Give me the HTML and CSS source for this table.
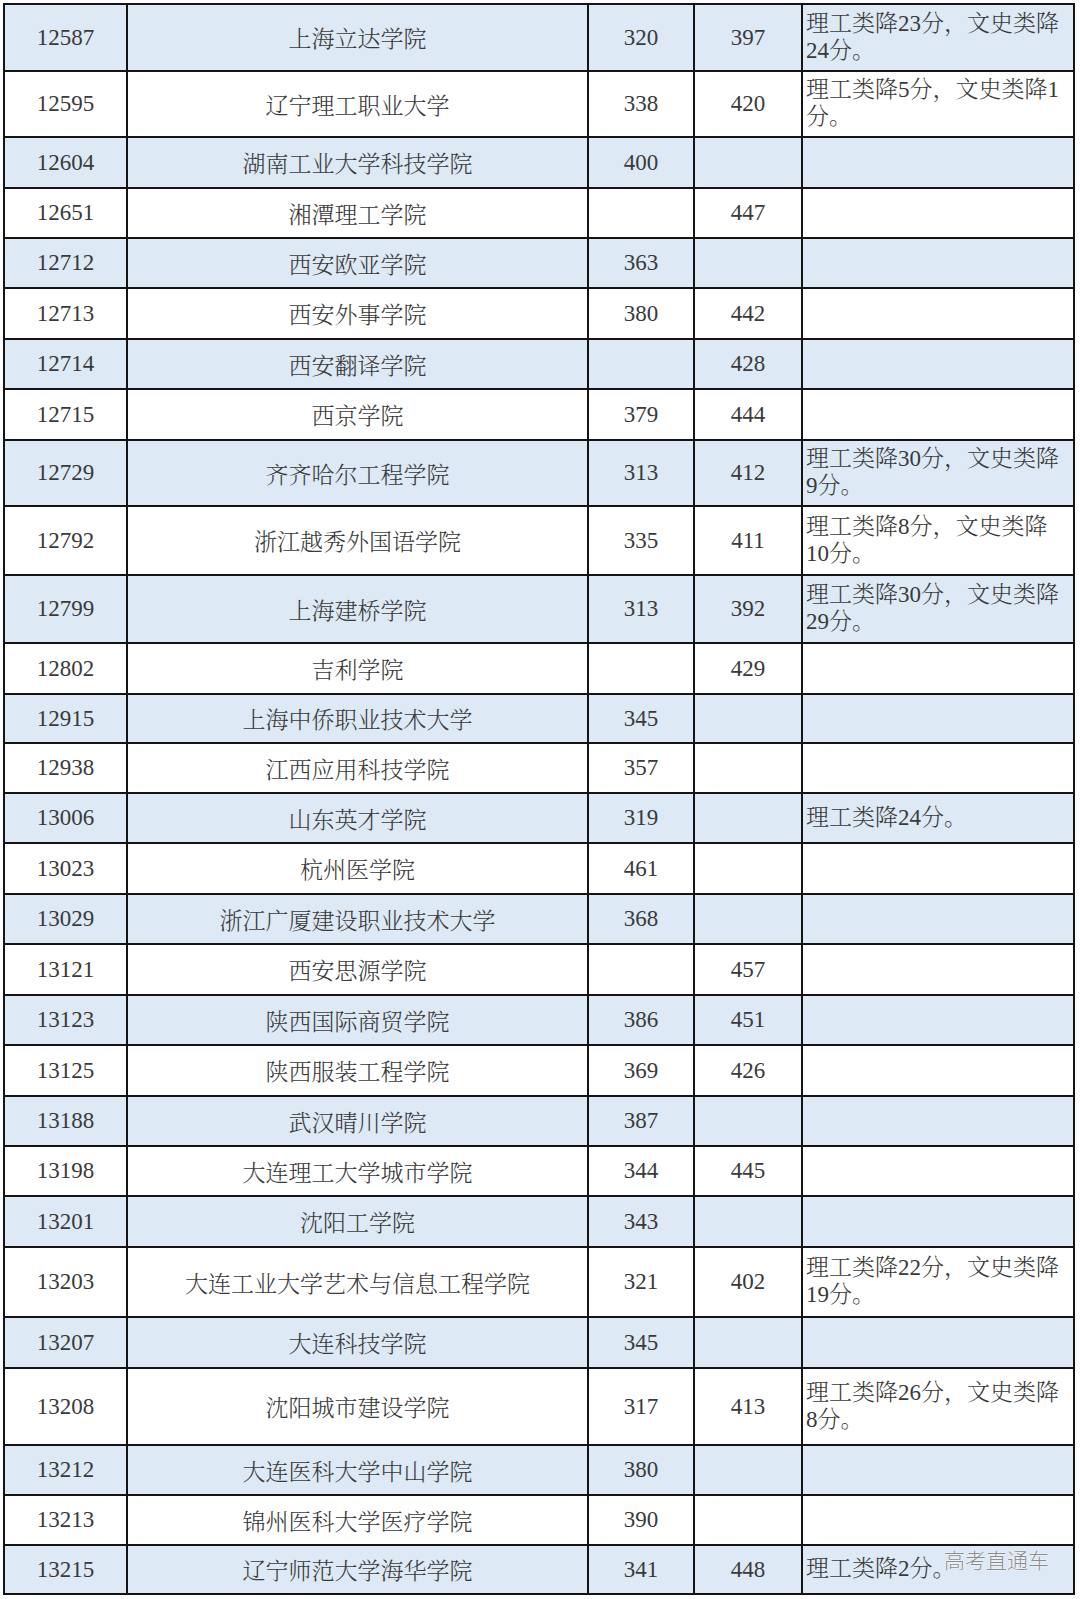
FILE: index.html
```html
<!DOCTYPE html>
<html lang="zh-CN">
<head>
<meta charset="utf-8">
<title>院校投档线</title>
<link rel="stylesheet" href="styles.css">
</head>
<body>
<div class="page">
  <div class="sheet">
    <div class="row alt"><div class="c">12587</div><div class="c">上海立达学院</div><div class="c">320</div><div class="c">397</div><div class="n">理工类降23分，文史类降24分。</div></div>
    <div class="row"><div class="c">12595</div><div class="c">辽宁理工职业大学</div><div class="c">338</div><div class="c">420</div><div class="n">理工类降5分，文史类降1分。</div></div>
    <div class="row alt"><div class="c">12604</div><div class="c">湖南工业大学科技学院</div><div class="c">400</div><div class="c"></div><div class="n"></div></div>
    <div class="row"><div class="c">12651</div><div class="c">湘潭理工学院</div><div class="c"></div><div class="c">447</div><div class="n"></div></div>
    <div class="row alt"><div class="c">12712</div><div class="c">西安欧亚学院</div><div class="c">363</div><div class="c"></div><div class="n"></div></div>
    <div class="row"><div class="c">12713</div><div class="c">西安外事学院</div><div class="c">380</div><div class="c">442</div><div class="n"></div></div>
    <div class="row alt"><div class="c">12714</div><div class="c">西安翻译学院</div><div class="c"></div><div class="c">428</div><div class="n"></div></div>
    <div class="row"><div class="c">12715</div><div class="c">西京学院</div><div class="c">379</div><div class="c">444</div><div class="n"></div></div>
    <div class="row alt"><div class="c">12729</div><div class="c">齐齐哈尔工程学院</div><div class="c">313</div><div class="c">412</div><div class="n">理工类降30分，文史类降9分。</div></div>
    <div class="row"><div class="c">12792</div><div class="c">浙江越秀外国语学院</div><div class="c">335</div><div class="c">411</div><div class="n">理工类降8分，文史类降10分。</div></div>
    <div class="row alt"><div class="c">12799</div><div class="c">上海建桥学院</div><div class="c">313</div><div class="c">392</div><div class="n">理工类降30分，文史类降29分。</div></div>
    <div class="row"><div class="c">12802</div><div class="c">吉利学院</div><div class="c"></div><div class="c">429</div><div class="n"></div></div>
    <div class="row alt"><div class="c">12915</div><div class="c">上海中侨职业技术大学</div><div class="c">345</div><div class="c"></div><div class="n"></div></div>
    <div class="row"><div class="c">12938</div><div class="c">江西应用科技学院</div><div class="c">357</div><div class="c"></div><div class="n"></div></div>
    <div class="row alt"><div class="c">13006</div><div class="c">山东英才学院</div><div class="c">319</div><div class="c"></div><div class="n">理工类降24分。</div></div>
    <div class="row"><div class="c">13023</div><div class="c">杭州医学院</div><div class="c">461</div><div class="c"></div><div class="n"></div></div>
    <div class="row alt"><div class="c">13029</div><div class="c">浙江广厦建设职业技术大学</div><div class="c">368</div><div class="c"></div><div class="n"></div></div>
    <div class="row"><div class="c">13121</div><div class="c">西安思源学院</div><div class="c"></div><div class="c">457</div><div class="n"></div></div>
    <div class="row alt"><div class="c">13123</div><div class="c">陕西国际商贸学院</div><div class="c">386</div><div class="c">451</div><div class="n"></div></div>
    <div class="row"><div class="c">13125</div><div class="c">陕西服装工程学院</div><div class="c">369</div><div class="c">426</div><div class="n"></div></div>
    <div class="row alt"><div class="c">13188</div><div class="c">武汉晴川学院</div><div class="c">387</div><div class="c"></div><div class="n"></div></div>
    <div class="row"><div class="c">13198</div><div class="c">大连理工大学城市学院</div><div class="c">344</div><div class="c">445</div><div class="n"></div></div>
    <div class="row alt"><div class="c">13201</div><div class="c">沈阳工学院</div><div class="c">343</div><div class="c"></div><div class="n"></div></div>
    <div class="row"><div class="c">13203</div><div class="c">大连工业大学艺术与信息工程学院</div><div class="c">321</div><div class="c">402</div><div class="n">理工类降22分，文史类降19分。</div></div>
    <div class="row alt"><div class="c">13207</div><div class="c">大连科技学院</div><div class="c">345</div><div class="c"></div><div class="n"></div></div>
    <div class="row"><div class="c">13208</div><div class="c">沈阳城市建设学院</div><div class="c">317</div><div class="c">413</div><div class="n">理工类降26分，文史类降8分。</div></div>
    <div class="row alt"><div class="c">13212</div><div class="c">大连医科大学中山学院</div><div class="c">380</div><div class="c"></div><div class="n"></div></div>
    <div class="row"><div class="c">13213</div><div class="c">锦州医科大学医疗学院</div><div class="c">390</div><div class="c"></div><div class="n"></div></div>
    <div class="row alt"><div class="c">13215</div><div class="c">辽宁师范大学海华学院</div><div class="c">341</div><div class="c">448</div><div class="n">理工类降2分。</div></div>
    <div class="watermark">高考直通车</div>
  </div>
</div>
</body>
</html>
```

FILE: styles.css
```css
html, body {
  margin: 0;
  padding: 0;
  background: #ffffff;
}

.page {
  padding: 3px 0 0 3px;
}

.sheet {
  position: relative;
  display: grid;
  width: 1070px;
  grid-template-columns: 123px 461px 106px 108px 272px;
  grid-template-rows:
    67px 66px 51px 50px 50px 51px 50px 51px
    66px 69px 68px 51px 49px 50px
    50px 51px 50px 51px 50px 51px 50px 50px 51px
    70px 51px 77px 50px 50px 49px;
  border-top: 2px solid #141414;
  border-left: 2px solid #141414;
  font-family: "Liberation Serif", "Noto Serif CJK SC", "Noto Sans CJK SC", serif;
  font-size: 23px;
  font-weight: 300;
  color: #3a3a3a;
}

.row {
  display: contents;
}

.row > div {
  box-sizing: border-box;
  border-right: 2px solid #141414;
  border-bottom: 2px solid #141414;
  background: #ffffff;
  display: flex;
  align-items: center;
}

.row.alt > div {
  background: #dde9f5;
}

.c {
  justify-content: center;
  text-align: center;
  white-space: nowrap;
}

.n {
  justify-content: flex-start;
  padding: 0 10px 2px 3px;
  line-height: 27px;
}

.watermark {
  position: absolute;
  right: 26px;
  bottom: 25px;
  font-family: "Noto Sans CJK SC", sans-serif;
  font-size: 21px;
  font-weight: 300;
  line-height: 1;
  color: #8c8c8c;
  text-shadow: 0 0 2px #ffffff, 0 0 1px #ffffff;
  pointer-events: none;
}
```
